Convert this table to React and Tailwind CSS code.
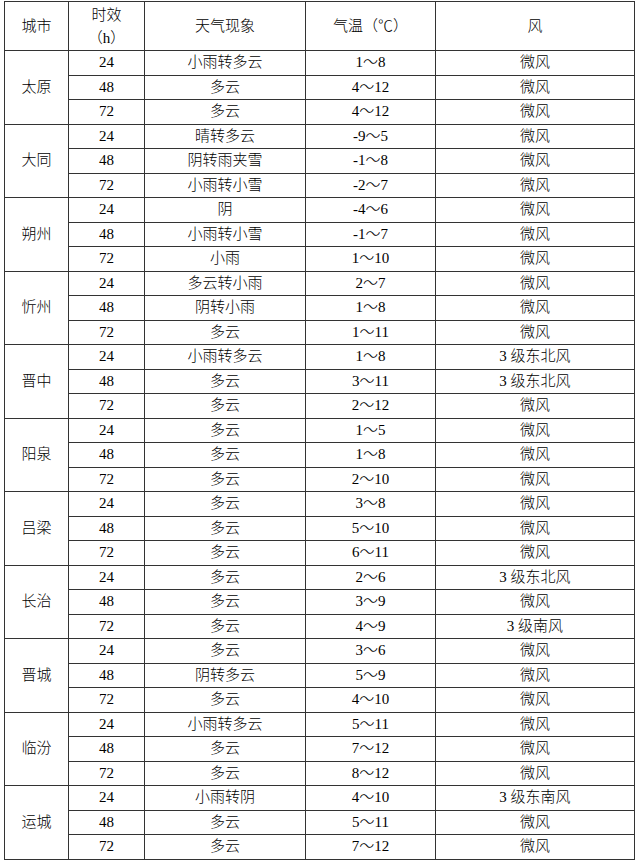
import React from 'react'

const data = [
    ['太原', [['24', '小雨转多云', '1～8', '微风'], ['48', '多云', '4～12', '微风'], ['72', '多云', '4～12', '微风']]],
    ['大同', [['24', '晴转多云', '-9～5', '微风'], ['48', '阴转雨夹雪', '-1～8', '微风'], ['72', '小雨转小雪', '-2～7', '微风']]],
    ['朔州', [['24', '阴', '-4～6', '微风'], ['48', '小雨转小雪', '-1～7', '微风'], ['72', '小雨', '1～10', '微风']]],
    ['忻州', [['24', '多云转小雨', '2～7', '微风'], ['48', '阴转小雨', '1～8', '微风'], ['72', '多云', '1～11', '微风']]],
    ['晋中', [['24', '小雨转多云', '1～8', '3 级东北风'], ['48', '多云', '3～11', '3 级东北风'], ['72', '多云', '2～12', '微风']]],
    ['阳泉', [['24', '多云', '1～5', '微风'], ['48', '多云', '1～8', '微风'], ['72', '多云', '2～10', '微风']]],
    ['吕梁', [['24', '多云', '3～8', '微风'], ['48', '多云', '5～10', '微风'], ['72', '多云', '6～11', '微风']]],
    ['长治', [['24', '多云', '2～6', '3 级东北风'], ['48', '多云', '3～9', '微风'], ['72', '多云', '4～9', '3 级南风']]],
    ['晋城', [['24', '多云', '3～6', '微风'], ['48', '阴转多云', '5～9', '微风'], ['72', '多云', '4～10', '微风']]],
    ['临汾', [['24', '小雨转多云', '5～11', '微风'], ['48', '多云', '7～12', '微风'], ['72', '多云', '8～12', '微风']]],
    ['运城', [['24', '小雨转阴', '4～10', '3 级东南风'], ['48', '多云', '5～11', '微风'], ['72', '多云', '7～12', '微风']]],
]

// 表格单元格样式
const cell = 'border border-[#333] text-center align-middle p-0 leading-none font-light'

export default function App() {
    return (
        <div className="bg-white w-[640px] h-[862px] pl-[4px] pt-[1px] text-black text-[15px]"
            style={{ fontFamily: '"Liberation Serif", "Noto Sans CJK SC", serif' }}>
            <table className="w-[630px] table-fixed border-collapse border border-[#555]">
                <colgroup>
                    <col className="w-[64px]" />
                    <col className="w-[76px]" />
                    <col className="w-[161px]" />
                    <col className="w-[130px]" />
                    <col className="w-[199px]" />
                </colgroup>
                <thead>
                    <tr className="h-[49px]">
                        <th className={cell}>城市</th>
                        <th className={cell}>
                            <div className="leading-[24px]">时效</div>
                            <div className="leading-[22px]">（<span className="font-normal">h</span>）</div>
                        </th>
                        <th className={cell}>天气现象</th>
                        <th className={cell}>气温（℃）</th>
                        <th className={cell}>风</th>
                    </tr>
                </thead>
                <tbody>
                    {data.map(([city, rows]) => (
                        rows.map((r, i) => (
                            <tr key={city + i} className="h-[24.5px]">
                                {i === 0 ? <td rowSpan={3} className={cell}>{city}</td> : null}
                                <td className={cell}>{r[0]}</td>
                                <td className={cell}>{r[1]}</td>
                                <td className={cell}>{r[2]}</td>
                                <td className={cell}>{r[3]}</td>
                            </tr>
                        ))
                    ))}
                </tbody>
            </table>
        </div>
    )
}
